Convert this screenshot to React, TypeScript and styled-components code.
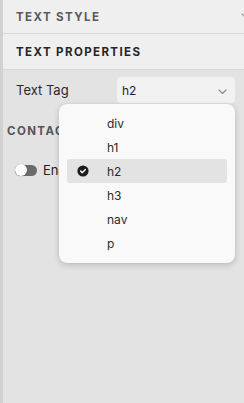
import styled, { createGlobalStyle } from "styled-components";

const GlobalStyle = createGlobalStyle`
  html, body {
    margin: 0;
    padding: 0;
    background: #e3e3e3;
  }
  body {
    font-family: Inter, "Noto Sans", "Liberation Sans", sans-serif;
    -webkit-font-smoothing: antialiased;
  }
`;

const tags = ["div", "h1", "h2", "h3", "nav", "p"];

const Chevron = ({ color = "#8a8a8a" }: { color?: string }) => (
  <svg width="9" height="6" viewBox="0 0 9 6" fill="none">
    <path d="M1 1l3.5 3.5L8 1" stroke={color} strokeWidth="1.1" strokeLinecap="round" strokeLinejoin="round" />
  </svg>
);

const CheckBadge = () => (
  <svg width="12" height="12" viewBox="0 0 12 12">
    <circle cx="6" cy="6" r="5.6" fill="#1c1c1c" />
    <path d="M3.6 6.1l1.6 1.6 3.2-3.3" stroke="#fff" strokeWidth="1.4" fill="none" strokeLinecap="round" strokeLinejoin="round" />
  </svg>
);

const App = () => {
  const selected = "h2";

  return (
    <Page>
      <GlobalStyle />
      <Strip />
      <Panel>
        <SectionHeader $muted>
          <span>TEXT STYLE</span>
          <HeaderChevron>
            <Chevron color="#9a9a9a" />
          </HeaderChevron>
        </SectionHeader>
        <SectionHeader $tall>
          <span>TEXT PROPERTIES</span>
        </SectionHeader>

        <Body>
          <FieldRow>
            <Label>Text Tag</Label>
            <SelectWrap>
              <SelectBox>
                <span>{selected}</span>
                <Chevron />
              </SelectBox>
              <Menu>
                {tags.map((t) => (
                  <MenuItem key={t} $active={t === selected}>
                    <CheckSlot>{t === selected && <CheckBadge />}</CheckSlot>
                    <span>{t}</span>
                  </MenuItem>
                ))}
              </Menu>
            </SelectWrap>
          </FieldRow>

          <SubHeading>CONTACT FORM</SubHeading>

          <ToggleRow>
            <Toggle />
            <ToggleLabel>Enable contact form</ToggleLabel>
          </ToggleRow>
        </Body>
      </Panel>
    </Page>
  );
};

const Page = styled.div`
  display: flex;
  width: 244px;
  height: 403px;
  overflow: hidden;
`;

const Strip = styled.div`
  width: 3px;
  flex-shrink: 0;
  background: #d2d1d2;
`;

const Panel = styled.div`
  flex: 1;
  min-width: 0;
  background: #e3e3e3;
  display: flex;
  flex-direction: column;
  overflow: hidden;
`;

const SectionHeader = styled.div<{ $muted?: boolean; $tall?: boolean }>`
  position: relative;
  height: ${(p) => (p.$tall ? "35px" : "33px")};
  display: flex;
  align-items: center;
  padding-left: 13px;
  background: #f0eff0;
  border-bottom: 1px solid #d8d7d8;
  font-size: 11.5px;
  font-weight: 700;
  letter-spacing: 1.4px;
  color: ${(p) => (p.$muted ? "#5b5b5b" : "#262626")};
`;

const HeaderChevron = styled.div`
  position: absolute;
  right: -6px;
  top: 13px;
  display: flex;
`;

const Body = styled.div`
  display: flex;
  flex-direction: column;
  padding-top: 7px;
`;

const FieldRow = styled.div`
  display: flex;
  align-items: center;
  padding-left: 13px;
`;

const Label = styled.div`
  width: 101px;
  font-size: 13px;
  color: #2a2a2a;
`;

const SelectWrap = styled.div`
  position: relative;
`;

const SelectBox = styled.div`
  width: 118px;
  height: 26px;
  box-sizing: border-box;
  display: flex;
  align-items: center;
  justify-content: space-between;
  padding: 0 8px 0 5px;
  background: #f3f2f3;
  border-radius: 4px;
  font-size: 12px;
  color: #222;

  svg {
    margin-top: 3px;
  }
`;

const Menu = styled.div`
  position: absolute;
  top: 27px;
  left: -58px;
  width: 176px;
  box-sizing: border-box;
  padding: 7px 8px 8px;
  background: #faf9fa;
  border-radius: 8px;
  box-shadow: 0 2px 6px rgba(0, 0, 0, 0.18), 0 0 1px rgba(0, 0, 0, 0.12);
  z-index: 10;
`;

const MenuItem = styled.div<{ $active?: boolean }>`
  height: 24px;
  display: flex;
  align-items: center;
  border-radius: 3px;
  background: ${(p) => (p.$active ? "#e3e3e3" : "transparent")};
  font-size: 12px;
  color: #2a2a2a;
`;

const CheckSlot = styled.div`
  width: 40px;
  padding-left: 10px;
  box-sizing: border-box;
  display: flex;
  align-items: center;
`;

const SubHeading = styled.div`
  margin-top: 21px;
  padding-left: 4px;
  font-size: 11.5px;
  font-weight: 700;
  letter-spacing: 1.4px;
  color: #555;
`;

const ToggleRow = styled.div`
  display: flex;
  align-items: center;
  gap: 6px;
  margin-top: 24px;
  padding-left: 12px;
`;

const Toggle = styled.div`
  position: relative;
  width: 22px;
  height: 11px;
  border-radius: 6px;
  background: #6b6b6b;

  &::after {
    content: "";
    position: absolute;
    left: 0;
    top: -0.5px;
    width: 12px;
    height: 12px;
    border-radius: 50%;
    background: #fff;
    box-shadow: 0 0 1px rgba(0, 0, 0, 0.4);
  }
`;

const ToggleLabel = styled.div`
  font-size: 13px;
  color: #222;
  white-space: nowrap;
`;

export default App;
